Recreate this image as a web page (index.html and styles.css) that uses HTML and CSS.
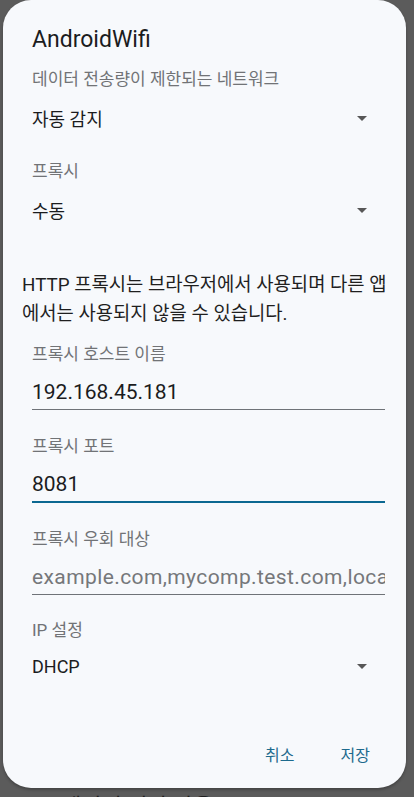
FILE: index.html
```html
<html>
<head>
    <title>AndroidWifi</title>
    <link rel="stylesheet" href="styles.css">
</head>
<body>
    <div class="dialog">
        <h2 class="title">AndroidWifi</h2>

        <div class="label">데이터 전송량이 제한되는 네트워크</div>
        <div class="select"><span>자동 감지</span><span class="caret"></span></div>

        <div class="label label-gap">프록시</div>
        <div class="select"><span>수동</span><span class="caret"></span></div>

        <p class="note">HTTP 프록시는 브라우저에서 사용되며 다른 앱 에서는 사용되지 않을 수 있습니다.</p>

        <div class="field">
            <div class="label">프록시 호스트 이름</div>
            <div class="input">192.168.45.181</div>
        </div>
        <div class="field">
            <div class="label">프록시 포트</div>
            <div class="input focused">8081</div>
        </div>
        <div class="field">
            <div class="label">프록시 우회 대상</div>
            <div class="input placeholder">example.com,mycomp.test.com,localhost</div>
        </div>

        <div class="label ip-label">IP 설정</div>
        <div class="select ip-select"><span>DHCP</span><span class="caret"></span></div>

        <div class="actions">
            <button class="text-btn">취소</button>
            <button class="text-btn">저장</button>
        </div>
    </div>
    <div class="behind">
        <span class="behind-icon">&#9906;</span>
        <span>데이터 절약 사용</span>
    </div>
</body>
</html>
```

FILE: styles.css
```css
body { margin: 0; height: 797px; overflow: hidden; background-color: #5b5b5b; font-family: Roboto, "Noto Sans CJK KR", sans-serif; color: #1b1c1e; }
.dialog { box-sizing: border-box; width: 403px; height: 788px; margin-left: 3px; padding: 24px 21px 0 29px; background-color: #f7f9fc; border-radius: 28px; box-shadow: 0 2px 3px rgba(0,0,0,0.25); }
.title { margin: 0; height: 32px; line-height: 32px; font-size: 23px; font-weight: normal; }
.label { height: 22px; line-height: 22px; font-size: 17px; color: #717376; margin-top: 12px; }
.label-gap { margin-top: 20px; }
.select { display: flex; justify-content: space-between; align-items: center; height: 44px; margin-top: 6px; font-size: 18px; padding-right: 18px; }
.caret { width: 0; height: 0; border-left: 5.5px solid transparent; border-right: 5.5px solid transparent; border-top: 5.5px solid #575757; }
.note { margin: 39px -10px 0 -10px; font-size: 18.8px; line-height: 29px; word-break: keep-all; color: #1f1f1f; }
.field { margin-top: 14px; }
.field + .field { margin-top: 25px; }
.field .label { margin-top: 0; }
.input { margin-top: 10px; height: 34px; line-height: 34px; font-size: 21px; white-space: nowrap; overflow: hidden; border-bottom: 1px solid #6f7378; }
.input.focused { border-bottom: 2px solid #0b6891; }
.input.placeholder { color: #75777a; letter-spacing: 0.4px; }
.ip-label { margin-top: 24px; }
.ip-select { margin-top: 3px; }
.actions { display: flex; justify-content: flex-end; gap: 22px; margin-top: 46px; padding-right: 3px; }
.text-btn { background: none; border: none; padding: 8px 12px; font-family: Roboto, "Noto Sans CJK KR", sans-serif; font-size: 16px; color: #1d6a8d; }
.behind { display: flex; align-items: center; gap: 38px; height: 40px; margin-top: -4px; padding-left: 10px; font-size: 22px; color: #1e1e1e; }
.behind-icon { font-size: 18px; }
```
